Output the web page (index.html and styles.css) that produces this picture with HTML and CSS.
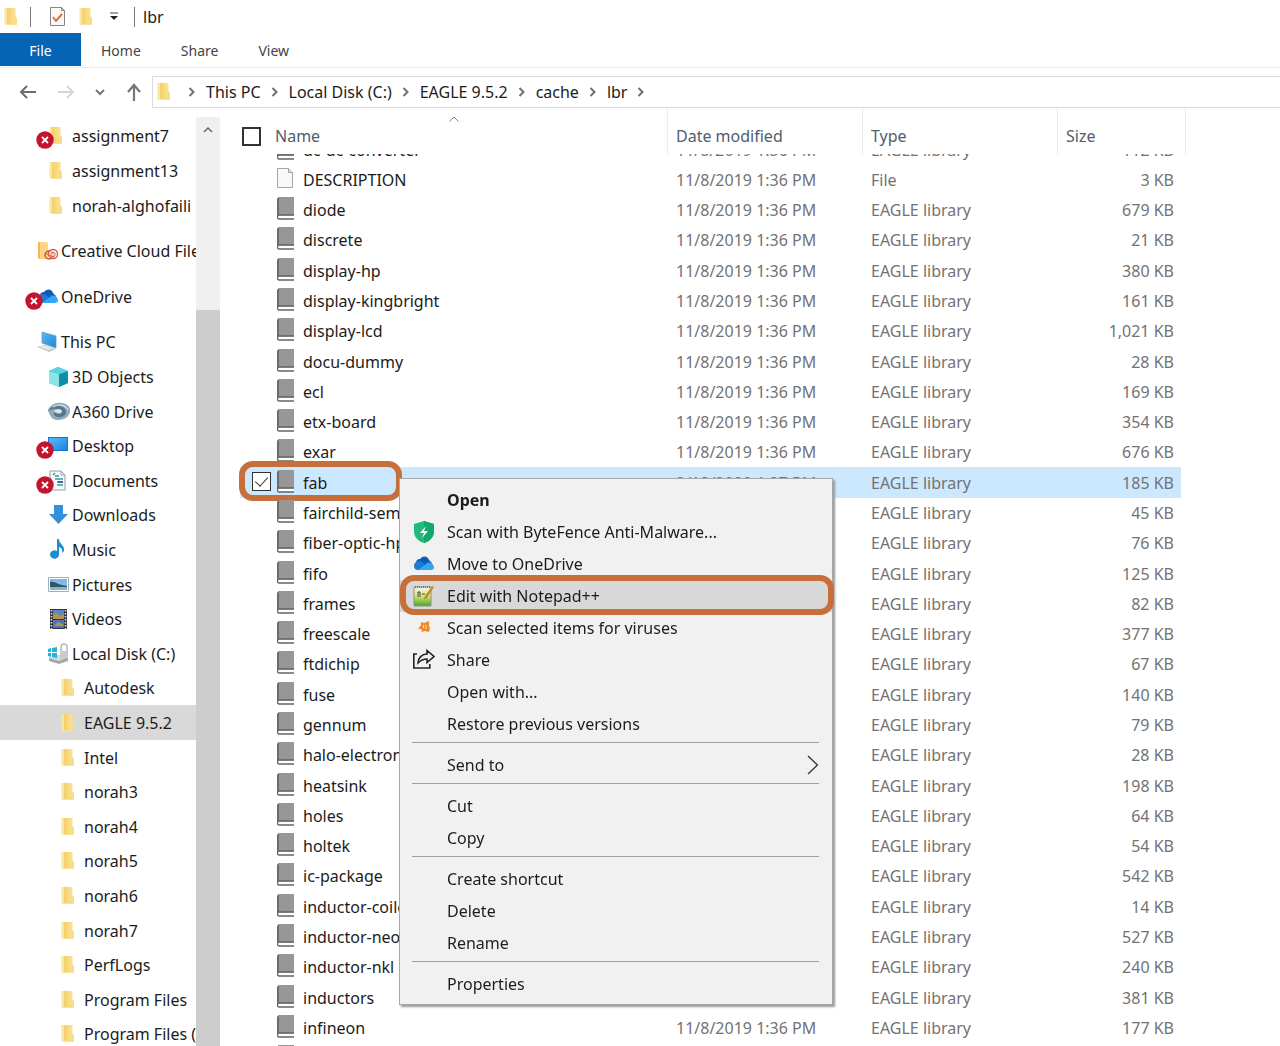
FILE: index.html
```html
<!DOCTYPE html>
<html lang="en">
<head>
    <meta charset="UTF-8">
    <meta name="viewport" content="width=device-width, initial-scale=1.0">
    <title>lbr</title>
    <link rel="stylesheet" href="styles.css">
</head>
<body>
    <!-- Shared icons -->
    <svg class="defs" aria-hidden="true">
        <linearGradient id="gold" x1="0" x2="1"><stop offset="0" stop-color="#f3cf68"/><stop offset="1" stop-color="#fbe39a"/></linearGradient>
        <linearGradient id="sky" x1="0" y1="0" x2="1" y2="1"><stop offset="0" stop-color="#55bdf8"/><stop offset="1" stop-color="#1c82dc"/></linearGradient>
        <linearGradient id="npp" x1="0" y1="0" x2="0" y2="1"><stop offset="0" stop-color="#f6f8ef"/><stop offset="0.45" stop-color="#d9e87a"/><stop offset="1" stop-color="#4aa52a"/></linearGradient>
        <symbol id="folder" viewBox="0 0 22 22">
            <path d="M1.500 2H12v17H3l-1.500-1z" fill="#fae6a4"/>
            <path d="M4 2h8.500v17L4 18z" fill="url(#gold)"/>
            <path d="M12 10l2 2v7l-4-1v-6z" fill="#f9dc86"/>
        </symbol>
        <symbol id="error" viewBox="0 0 18 18">
            <circle cx="9" cy="9" r="8.7" fill="#c4122f"/>
            <path d="M6 6l6 6M12 6l-6 6" stroke="#fff" stroke-width="1.8"/>
        </symbol>
        <symbol id="creative" viewBox="0 0 22 22">
            <path d="M1 2h9l1 2v15H3l-2-1z" fill="#fbd583"/>
            <path d="M1 2h2v17l-2-1z" fill="#f2b75a"/>
            <circle cx="12" cy="15" r="4" fill="none" stroke="#d65238" stroke-width="1.5"/>
            <circle cx="16" cy="14" r="4.5" fill="#fff" fill-opacity="0.6" stroke="#d65238" stroke-width="1.3"/>
            <circle cx="16" cy="14.500" r="2.200" fill="none" stroke="#d65238"/>
            <path d="M9 13l6 4" stroke="#d65238"/>
        </symbol>
        <symbol id="cloud" viewBox="0 0 22 22">
            <path d="M3 9c1-3 3-3 4-3 3-4 8-3 9 1l3 3-5 6H4z" fill="#0c5cb8"/>
            <path d="M1 13c0-4 4-6 8-4l9 8H5c-3 0-4-2-4-4z" fill="#1b7bd6"/>
            <path d="M5 17l8-6c2-3 7-1 7 1 2 2 1 5-2 5z" fill="#35a5ee"/>
        </symbol>
        <symbol id="pc" viewBox="0 0 22 22">
            <path d="M5 1l14 4v12L5 12z" fill="url(#sky)" stroke="#7e98ab" stroke-width="0.8"/>
            <path d="M0 16l8-2 11 4-7 3z" fill="#c3c8ce"/>
            <path d="M2 16l6-1.500 8 3-5 1.500z" fill="#e6e9ec"/>
        </symbol>
        <symbol id="cube" viewBox="0 0 22 22">
            <path d="M10 1l10 4v12l-9 4-10-4V5z" fill="#31bccb"/>
            <path d="M1 5l10 3v13L1 17z" fill="#8be4e6"/>
            <path d="M11 8l9-3v12l-9 4z" fill="#0d8fa8"/>
            <path d="M10 1l10 4-9 3L1 5z" fill="#5bd2dc"/>
        </symbol>
        <symbol id="a360" viewBox="0 0 22 22">
            <path d="M0 10c1-6 8-9 14-8 7 1 9 6 8 9-1 5-6 8-12 8-4 0-7-2-8-5z" fill="#8fabbb"/>
            <path d="M0 10c3-6 16-7 18 0 1 4-4 7-8 6-3 0-5-3-4-5 3 3 8 2 8 0-1-4-9-4-14-1z" fill="#55788c"/>
            <path d="M6 11c0-3 7-4 8-1 0 2-4 3-6 1z" fill="#dce8ee"/>
            <path d="M5 6c5-3 12-3 15 3" fill="none" stroke="#d1e0e8" stroke-width="1.2"/>
        </symbol>
        <symbol id="desktop" viewBox="0 0 22 22">
            <path d="M0 2h20v14H0z" fill="#0d78d4"/>
            <path d="M1 3h18v12H1z" fill="url(#sky)"/>
        </symbol>
        <symbol id="documents" viewBox="0 0 22 22">
            <path d="M2 1h11l4 4v15H2z" fill="#f7fafb" stroke="#8da0a5"/>
            <path d="M13 1v4h4" fill="none" stroke="#8da0a5"/>
            <path d="M5 5l2-2M7 6h4M7 9h8M9 12h6M9 15h6" stroke="#3d9a94" stroke-width="1.500"/>
            <path d="M10 11h5v2h-5z" fill="#346b99"/>
        </symbol>
        <symbol id="downloads" viewBox="0 0 22 22">
            <path d="M6 1h9v9h5l-9.500 10L1 10h5z" fill="#3390df"/>
        </symbol>
        <symbol id="music" viewBox="0 0 22 22">
            <path d="M9 0h2c0 5 6 6 5 12l-2 2c1-4-1-5-3-6v8a4.500 4.200 0 1 1-2-4z" fill="#1c8fd0"/>
        </symbol>
        <symbol id="pictures" viewBox="0 0 22 22">
            <path d="M0.500 3.500h20v14h-20z" fill="#fff" stroke="#9db0ba"/>
            <path d="M2 5h17v11H2z" fill="#7fb9e4"/>
            <path d="M2 8c5-1 7 3 17 4v1H2z" fill="#2e5667"/>
            <path d="M2 13h17v3H2z" fill="#8fb3c5"/>
        </symbol>
        <symbol id="videos" viewBox="0 0 22 22">
            <path d="M2 1h17v20H2z" fill="#2f3540"/>
            <path d="M5 2h11v9H5z" fill="#5f83c4"/>
            <path d="M5 12h11v8H5z" fill="#4b74b9"/>
            <path d="M5 7l4-2 3 3 4-2v5H5zM6 18l4-4 5 2v2z" fill="#b69443"/>
            <path d="M3.500 2v19M17.500 2v19" stroke="#dfe2e6" stroke-width="1.500" stroke-dasharray="1.500 1.500"/>
        </symbol>
        <symbol id="disk" viewBox="0 0 22 22">
            <path d="M1 15l10-3 9 2v4l-9 3-10-3z" fill="#a3a8ac"/>
            <path d="M1 15l10-3 9 2-9 4z" fill="#d9dcde"/>
            <path d="M0 6l3-1v4H0zM4 5l5-1v5H4zM0 10h3v4l-3-1zM4 10h5v5l-5-1z" fill="#1fb4d8"/>
            <path d="M13 8V4c0-4 6-4 6 0v4" fill="none" stroke="#b5b9bc" stroke-width="1.500"/>
            <path d="M12 8h8v7l-8 1z" fill="#c9cccd"/>
        </symbol>
        <symbol id="book" viewBox="0 0 17 23">
            <path d="M2 0h15v19H0V2z" fill="#979797"/>
            <path d="M2 0v18H0V2z" fill="#6b6b6b"/>
            <path d="M1 18.500h16v3H1z" fill="#fff"/>
            <path d="M17 18H2c-2 0-2 4 0 4h15" fill="none" stroke="#646464" stroke-width="1.300"/>
        </symbol>
        <symbol id="page" viewBox="0 0 17 23">
            <path d="M0.500 1.500h11l4 4v15h-15z" fill="#f8f8f8" stroke="#a5a5a5"/>
            <path d="M11.500 1.500v4h4" fill="#ddd" stroke="#a5a5a5"/>
        </symbol>
        <symbol id="chevron" viewBox="0 0 8 12">
            <path d="M1.500 2l4 4-4 4" fill="none" stroke="#707070" stroke-width="2"/>
        </symbol>
    </svg>

    <header>
        <div class="titleBar">
            <svg class="icon"><use href="#folder"/></svg>
            <span class="divider"></span>
            <button class="iconBtn" aria-label="Properties">
                <svg class="icon" viewBox="0 0 22 22"><path d="M3.500 1.500h11l3 3v15h-14z" fill="#fafafa" stroke="#858585"/><path d="M14.500 1.500v3h3" fill="none" stroke="#858585"/><path d="M6 11l3 4 6-7" fill="none" stroke="#dc7135" stroke-width="2"/></svg>
            </button>
            <button class="iconBtn" aria-label="New folder"><svg class="icon"><use href="#folder"/></svg></button>
            <button class="iconBtn" aria-label="Customize toolbar">
                <svg class="caret" viewBox="0 0 10 10"><path d="M1 1h8" stroke="#444"/><path d="M1 4h8L5 8z" fill="#222"/></svg>
            </button>
            <span class="divider"></span>
            <h1>lbr</h1>
        </div>
        <nav class="tabs">
            <a href="#" class="fileTab">File</a>
            <a href="#">Home</a>
            <a href="#">Share</a>
            <a href="#">View</a>
        </nav>
        <div class="addressBar">
            <div class="arrows">
                <button class="iconBtn" aria-label="Back"><svg class="arrow" viewBox="0 0 18 18"><path d="M17 9H2M8 3L2 9l6 6" fill="none" stroke="#6e6e6e" stroke-width="2"/></svg></button>
                <button class="iconBtn" aria-label="Forward"><svg class="arrow" viewBox="0 0 18 18"><path d="M1 9h15M10 3l6 6-6 6" fill="none" stroke="#d6d6d6" stroke-width="2"/></svg></button>
                <button class="iconBtn" aria-label="Recent locations"><svg class="caret" viewBox="0 0 10 10"><path d="M1 3l4 4 4-4" fill="none" stroke="#777" stroke-width="2"/></svg></button>
                <button class="iconBtn" aria-label="Up"><svg class="arrow" viewBox="0 0 18 18"><path d="M9 18V2M3 9l6-7 6 7" fill="none" stroke="#777" stroke-width="2.200"/></svg></button>
            </div>
            <div class="path">
                <svg class="icon"><use href="#folder"/></svg>
                <svg class="chevron"><use href="#chevron"/></svg>
                <a href="#">This PC</a>
                <svg class="chevron"><use href="#chevron"/></svg>
                <a href="#">Local Disk (C:)</a>
                <svg class="chevron"><use href="#chevron"/></svg>
                <a href="#">EAGLE 9.5.2</a>
                <svg class="chevron"><use href="#chevron"/></svg>
                <a href="#">cache</a>
                <svg class="chevron"><use href="#chevron"/></svg>
                <a href="#">lbr</a>
                <svg class="chevron"><use href="#chevron"/></svg>
            </div>
        </div>
    </header>

    <main>
        <nav class="sidebar">
            <ul id="tree">
                <!-- Folders are filled in by the script -->
            </ul>
            <div class="scrollbar">
                <svg class="scrollUp" viewBox="0 0 10 10"><path d="M1 7l4-4 4 4" fill="none" stroke="#666" stroke-width="1.500"/></svg>
                <div class="thumb"></div>
            </div>
        </nav>

        <section class="files" id="files">
            <table>
                <thead>
                    <tr>
                        <th class="nameCol">
                            <div class="nameHead">
                                <input type="checkbox" aria-label="Select all">
                                <span>Name</span>
                            </div>
                            <svg class="sortMark" viewBox="0 0 10 6"><path d="M0.500 5.500l4.500-4.500 4.500 4.500" fill="none" stroke="#888"/></svg>
                        </th>
                        <th class="dateCol">Date modified</th>
                        <th class="typeCol">Type</th>
                        <th class="sizeCol">Size</th>
                    </tr>
                </thead>
                <tbody id="fileRows"></tbody>
            </table>
        </section>
    </main>

    <!-- Context menu -->
    <div class="menu" role="menu">
        <button class="menuItem default"><span class="menuIcon"></span>Open</button>
        <button class="menuItem">
            <span class="menuIcon"><svg class="icon" viewBox="0 0 22 22"><path d="M11 0l10 3v7c0 6-4 10-10 12C5 20 1 16 1 10V3z" fill="#1fba7c"/><path d="M11 0l10 3v7c0 6-4 10-10 12z" fill="#14a96c"/><path d="M13 5l-6 7h4l-2 5 6-7h-4z" fill="#fff"/></svg></span>
            Scan with ByteFence Anti-Malware...
        </button>
        <button class="menuItem"><span class="menuIcon"><svg class="icon"><use href="#cloud"/></svg></span>Move to OneDrive</button>
        <button class="menuItem active">
            <span class="menuIcon"><svg class="icon" viewBox="0 0 22 22"><path d="M1 2h17v19H1z" fill="url(#npp)" stroke="#8b9680"/><path d="M2 2h16" stroke="#777" stroke-width="2" stroke-dasharray="1 1"/><path d="M5 12V7h2v5M9 9h3M14 9h2" fill="none" stroke="#444"/><path d="M19 1l2 1-7 11-3 2 1-4z" fill="#c58a2b"/></svg></span>
            Edit with Notepad++
        </button>
        <button class="menuItem">
            <span class="menuIcon"><svg class="icon" viewBox="0 0 22 22"><path d="M8 5l3 1 5-2v5l1 2-1 4-4-1-3 1-1-3H5l3-4z" fill="#ef8a2c"/><path d="M10.500 8v3M13 8v4" stroke="#f7dcc0"/></svg></span>
            Scan selected items for viruses
        </button>
        <button class="menuItem">
            <span class="menuIcon"><svg class="icon" viewBox="0 0 22 22"><path d="M4 5H0.800v14h16v-4" fill="none" stroke="#222" stroke-width="1.600"/><path d="M14 1.500l7 6-7 6V10c-4 0-6 1-9 4 0-5 4-9 9-9z" fill="none" stroke="#222" stroke-width="1.600"/></svg></span>
            Share
        </button>
        <button class="menuItem"><span class="menuIcon"></span>Open with...</button>
        <button class="menuItem"><span class="menuIcon"></span>Restore previous versions</button>
        <hr>
        <button class="menuItem">
            <span class="menuIcon"></span>Send to
            <svg class="submenu" viewBox="0 0 12 20"><path d="M1 1l9.500 9L1 19" fill="none" stroke="#333" stroke-width="1.300"/></svg>
        </button>
        <hr>
        <button class="menuItem"><span class="menuIcon"></span>Cut</button>
        <button class="menuItem"><span class="menuIcon"></span>Copy</button>
        <hr>
        <button class="menuItem"><span class="menuIcon"></span>Create shortcut</button>
        <button class="menuItem"><span class="menuIcon"></span>Delete</button>
        <button class="menuItem"><span class="menuIcon"></span>Rename</button>
        <hr>
        <button class="menuItem"><span class="menuIcon"></span>Properties</button>
    </div>

    <script>
        // Folder tree: name, icon, level, extra classes
        const folders = [
            ["assignment7", "folder", 1, "error"],
            ["assignment13", "folder", 1, ""],
            ["norah-alghofaili", "folder", 1, ""],
            ["Creative Cloud Files", "creative", 0, "group"],
            ["OneDrive", "cloud", 0, "group error"],
            ["This PC", "pc", 0, "group"],
            ["3D Objects", "cube", 1, ""],
            ["A360 Drive", "a360", 1, ""],
            ["Desktop", "desktop", 1, "error"],
            ["Documents", "documents", 1, "error"],
            ["Downloads", "downloads", 1, ""],
            ["Music", "music", 1, ""],
            ["Pictures", "pictures", 1, ""],
            ["Videos", "videos", 1, ""],
            ["Local Disk (C:)", "disk", 1, ""],
            ["Autodesk", "folder", 2, ""],
            ["EAGLE 9.5.2", "folder", 2, "current"],
            ["Intel", "folder", 2, ""],
            ["norah3", "folder", 2, ""],
            ["norah4", "folder", 2, ""],
            ["norah5", "folder", 2, ""],
            ["norah6", "folder", 2, ""],
            ["norah7", "folder", 2, ""],
            ["PerfLogs", "folder", 2, ""],
            ["Program Files", "folder", 2, ""],
            ["Program Files (x86)", "folder", 2, ""]
        ];

        // File list: name, size in KB
        const files = [
            ["dc-dc-converter", "112"],
            ["DESCRIPTION", "3"],
            ["diode", "679"],
            ["discrete", "21"],
            ["display-hp", "380"],
            ["display-kingbright", "161"],
            ["display-lcd", "1,021"],
            ["docu-dummy", "28"],
            ["ecl", "169"],
            ["etx-board", "354"],
            ["exar", "676"],
            ["fab", "185"],
            ["fairchild-semic", "45"],
            ["fiber-optic-hp", "76"],
            ["fifo", "125"],
            ["frames", "82"],
            ["freescale", "377"],
            ["ftdichip", "67"],
            ["fuse", "140"],
            ["gennum", "79"],
            ["halo-electronics", "28"],
            ["heatsink", "198"],
            ["holes", "64"],
            ["holtek", "54"],
            ["ic-package", "542"],
            ["inductor-coilcraft", "14"],
            ["inductor-neosid", "527"],
            ["inductor-nkl", "240"],
            ["inductors", "381"],
            ["infineon", "177"],
            ["intersil", "96"]
        ];

        // Function to display the folder tree
        function displayFolders() {
            const tree = document.getElementById("tree");
            folders.forEach(([name, icon, level, extra]) => {
                const item = document.createElement("li");
                item.className = `level${level} ${extra}`;
                const badge = extra.includes("error") ? `<svg class="badge"><use href="#error"/></svg>` : "";
                item.innerHTML = `
                    <a href="#">
                        <span class="treeIcon"><svg class="icon"><use href="#${icon}"/></svg>${badge}</span>
                        <span>${name}</span>
                    </a>
                `;
                tree.appendChild(item);
            });
        }

        // Function to display the file rows
        function displayFiles() {
            const rows = document.getElementById("fileRows");
            files.forEach(([name, size]) => {
                const row = document.createElement("tr");
                const isFile = name === "DESCRIPTION";
                const selected = name === "fab";
                if (selected) {
                    row.classList.add("selected");
                }
                row.innerHTML = `
                    <td>
                        <div class="fileName">
                            ${selected ? `<input type="checkbox" aria-label="Select fab" checked>` : ""}
                            <svg class="fileIcon"><use href="#${isFile ? "page" : "book"}"/></svg>
                            <span>${name}</span>
                        </div>
                    </td>
                    <td>${selected ? "2/18/2020 1:27 PM" : "11/8/2019 1:36 PM"}</td>
                    <td>${isFile ? "File" : "EAGLE library"}</td>
                    <td class="size">${size} KB</td>
                `;
                rows.appendChild(row);
            });
        }

        displayFolders();
        displayFiles();

        document.getElementById("files").scrollTop = 20;
    </script>
</body>
</html>
```
FILE: styles.css
```css
/* CSS Styles */
*,
*::before,
*::after {
    box-sizing: border-box;
}

body {
    position: relative;
    display: flex;
    flex-direction: column;
    height: 100vh;
    margin: 0;
    overflow: hidden;
    background-color: #fff;
    color: #1c1c1c;
    font-family: "Noto Sans", "Open Sans", sans-serif;
    font-size: 16px;
    line-height: 24px;
}

a {
    color: inherit;
    text-decoration: none;
}

button {
    font: inherit;
    color: inherit;
    background: none;
    border: none;
    padding: 0;
}

svg {
    display: block;
    flex-shrink: 0;
}

.defs {
    position: absolute;
    width: 0;
    height: 0;
}

.icon {
    width: 22px;
    height: 22px;
}

.caret {
    width: 10px;
    height: 10px;
}

.arrow {
    width: 18px;
    height: 18px;
}

/* Title bar */
.titleBar {
    display: flex;
    align-items: center;
    height: 33px;
    padding-left: 3px;
}

.titleBar h1 {
    margin: 0 0 0 8px;
    font-size: 16px;
    font-weight: normal;
}

.titleBar .iconBtn {
    margin-right: 9px;
}

.divider {
    width: 1px;
    height: 20px;
    margin: 0 16px 0 5px;
    background-color: #777;
}

.iconBtn + .divider {
    margin: 0 0 0 6px;
}

/* Ribbon tabs */
.tabs {
    display: flex;
    height: 35px;
    border-bottom: 1px solid #ececec;
    color: #444;
    font-size: 14px;
    line-height: 35px;
}

.tabs a {
    margin-left: 20px;
    margin-right: 20px;
}

.tabs .fileTab {
    width: 81px;
    height: 33px;
    margin: 0;
    background-color: #0564b3;
    color: #fff;
    text-align: center;
}

/* Address bar */
.addressBar {
    display: flex;
    padding-top: 8px;
}

.arrows {
    display: flex;
    align-items: center;
    justify-content: space-between;
    width: 152px;
    padding: 0 9px 0 19px;
}

.path {
    display: flex;
    flex: 1;
    align-items: center;
    gap: 10px;
    height: 32px;
    padding-left: 3px;
    border: 1px solid #dcdcdc;
    border-right: none;
}

.chevron {
    width: 8px;
    height: 12px;
}

/* Folder tree */
main {
    display: flex;
    flex: 1;
    min-height: 0;
}

.sidebar {
    display: flex;
    width: 220px;
    flex-shrink: 0;
}

.sidebar ul {
    flex: 1;
    min-width: 0;
    margin: 0;
    padding: 11px 0 0;
    overflow: hidden;
    list-style-type: none;
}

.sidebar li {
    height: 35px;
}

.sidebar li:nth-child(5n+1),
.sidebar li:nth-child(5n+4) {
    height: 34px;
}

.sidebar .group {
    margin-top: 11px;
}

.sidebar li a {
    display: flex;
    align-items: center;
    gap: 2px;
    height: 100%;
    white-space: nowrap;
}

.level0 {
    padding-left: 37px;
}

.level1 {
    padding-left: 48px;
}

.level2 {
    padding-left: 60px;
}

.current {
    background-color: #d9d9d9;
}

.treeIcon {
    position: relative;
}

.badge {
    position: absolute;
    top: 6px;
    left: -12px;
    width: 18px;
    height: 18px;
}

.scrollbar {
    width: 24px;
    margin-top: 9px;
    background-color: #f0f0f0;
}

.scrollUp {
    width: 10px;
    height: 10px;
    margin: 8px auto 175px 7px;
}

.thumb {
    height: 100%;
    background-color: #cdcdcd;
}

/* File list */
.files {
    flex: 1;
    min-width: 0;
    padding-left: 20px;
    overflow: hidden;
}

table {
    width: 941px;
    border-collapse: separate;
    border-spacing: 0;
    table-layout: fixed;
}

th {
    position: sticky;
    top: 0;
    z-index: 1;
    height: 46px;
    padding: 10px 0 0 8px;
    background-color: #fff;
    border-left: 1px solid #ececec;
    color: #4f5d6e;
    font-weight: normal;
    text-align: left;
}

.nameCol {
    width: 427px;
    padding-left: 2px;
    border-left: none;
}

.dateCol,
.typeCol {
    width: 195px;
}

.sizeCol::after {
    content: "";
    position: absolute;
    top: 0;
    right: -5px;
    height: 100%;
    border-right: 1px solid #ececec;
}

.nameHead {
    display: flex;
    align-items: center;
    gap: 14px;
}

.sortMark {
    position: absolute;
    top: 8px;
    left: 49%;
    width: 10px;
    height: 6px;
}

input[type="checkbox"] {
    appearance: none;
    width: 19px;
    height: 19px;
    margin: 0;
    background-color: #fff;
    border: 2px solid #333;
}

.fileName input[type="checkbox"] {
    position: absolute;
    top: 5px;
    left: 12px;
    border-width: 1px;
}

input[type="checkbox"]:checked::after {
    content: "";
    position: absolute;
    top: 1px;
    left: 5px;
    width: 7px;
    height: 12px;
    border: solid #333;
    border-width: 0 1px 1px 0;
    transform: rotate(42deg);
}

td {
    height: 30px;
    padding: 0 0 0 9px;
    color: #737373;
    white-space: nowrap;
}

tbody tr:nth-child(7n+1) td,
tbody tr:nth-child(7n+5) td {
    height: 31px;
}

td:first-child {
    position: relative;
    padding-left: 37px;
    color: #1c1c1c;
}

.size {
    padding-right: 7px;
    text-align: right;
}

.fileName {
    display: flex;
    align-items: center;
    gap: 9px;
}

.fileIcon {
    width: 17px;
    height: 23px;
    margin-bottom: 3px;
}

.selected td {
    background-color: #cce8ff;
}

/* Orange marker around the selected file */
.selected td:first-child::after {
    content: "";
    position: absolute;
    top: -6px;
    left: -1px;
    width: 163px;
    height: 40px;
    border: 6px solid #c66f3a;
    border-radius: 14px;
}

/* Context menu */
.menu {
    position: absolute;
    top: 478px;
    left: 399px;
    z-index: 2;
    width: 434px;
    padding: 5px 0 4px;
    background-color: #f1f1f1;
    border: 1px solid #a8a8a8;
    box-shadow: 2px 2px 2px #999;
}

.menuItem {
    position: relative;
    display: flex;
    align-items: center;
    width: 100%;
    height: 32px;
    padding-left: 13px;
    text-align: left;
}

.default {
    font-weight: bold;
}

.menuIcon {
    width: 34px;
}

.active {
    background-color: #d8d8d8;
}

/* Orange marker around the active item */
.active::after {
    content: "";
    position: absolute;
    top: -5px;
    left: 0;
    width: 434px;
    height: 40px;
    border: 6px solid #c66f3a;
    border-radius: 14px;
}

.submenu {
    width: 12px;
    height: 20px;
    margin-left: auto;
    margin-right: 13px;
}

.menu hr {
    height: 1px;
    margin: 2px 13px 6px 12px;
    border: none;
    background-color: #a0a0a0;
}
```
